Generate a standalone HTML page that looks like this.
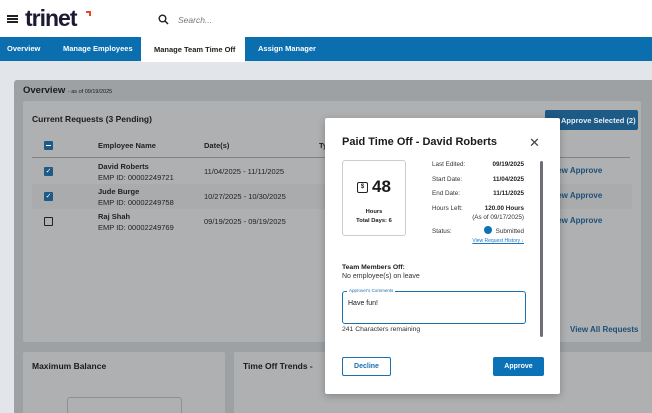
<!DOCTYPE html><html><head><style>
*{box-sizing:border-box;margin:0;padding:0}
html,body{width:652px;height:413px;overflow:hidden}
body{background:#e2e5e9;font-family:"Liberation Sans",sans-serif;position:relative;color:#1a1a1a}
.a{position:absolute}
.hdr{left:0;top:0;width:652px;height:37px;background:#fff}
.nav{left:0;top:37px;width:652px;height:24px;background:#0b6eae}
.nav span{position:absolute;top:7px;font-size:7.5px;font-weight:bold;color:#fff}
.outer{left:14px;top:80px;width:650px;height:340px;background:#9ea1a4;border-radius:3px}
.inner{left:23px;top:101px;width:618px;height:241px;background:#aeb0b2;border-radius:2px}
.b{font-weight:bold}
.cb{width:9px;height:9px;background:#1d5a87;border-radius:1px}
.row{font-size:7.5px;color:#222}
.va{color:#1e4f78;font-weight:bold;font-size:8px}
.modal{left:325px;top:118px;width:235px;height:276px;background:#fff;box-shadow:0 2px 8px rgba(0,0,0,.25);border-radius:2px}
.m{position:absolute;font-size:6.3px;color:#333}
.mr{position:absolute;font-size:6.3px;font-weight:bold;right:36px;text-align:right;color:#222}
</style></head><body>
<div class="a hdr">
 <div class="a" style="left:7px;top:15px;width:11px;height:2px;background:#222;box-shadow:0 3px 0 #222,0 6px 0 #222"></div>
 <div class="a b" style="left:25px;top:5px;font-size:23px;color:#1c1a33;letter-spacing:-1px">trinet</div>
 <div class="a" style="left:86px;top:11px;width:5px;height:5px;border-top:2px solid #e8452c;border-right:2px solid #e8452c"></div>
 <svg class="a" style="left:158px;top:14px" width="11" height="11" viewBox="0 0 11 11"><circle cx="4.5" cy="4.5" r="3.3" fill="none" stroke="#222" stroke-width="1.4"/><path d="M7 7l3 3" stroke="#222" stroke-width="1.5"/></svg>
 <div class="a" style="left:178px;top:15px;font-size:8.5px;font-style:italic;color:#777">Search...</div>
</div>
<div class="a nav">
 <span style="left:7px">Overview</span><span style="left:63px">Manage Employees</span>
 <div class="a" style="left:141px;top:0;width:104px;height:25px;background:#fff"></div>
 <span style="left:154px;color:#222;top:8px">Manage Team Time Off</span><span style="left:258px">Assign Manager</span>
</div>
<div class="a outer"></div>
<div class="a b" style="left:23px;top:85px;font-size:9.5px">Overview <span style="font-size:5.5px;font-weight:normal">- as of 09/19/2025</span></div>
<div class="a inner"></div>
<div class="a b" style="left:32px;top:114px;font-size:8.5px">Current Requests (3 Pending)</div>
<div class="a" style="left:545px;top:110px;width:93px;height:20px;background:#1d5a86;border-radius:2px;color:#e8eef4;font-size:7.5px;font-weight:bold;padding:6px 0 0 16px">Approve Selected (2)</div>
<div class="a cb" style="left:44px;top:141px"><div style="margin:4px 2px;height:1.2px;background:#fff"></div></div>
<div class="a row b" style="left:98px;top:141px">Employee Name</div>
<div class="a row b" style="left:204px;top:141px">Date(s)</div>
<div class="a row b" style="left:319px;top:141px">Ty</div>
<div class="a" style="left:32px;top:157px;width:520px;height:1px;background:#808285"></div>
<div class="a" style="left:540px;top:157px;width:90px;height:1px;background:#808285"></div>
<div class="a" style="left:32px;top:184px;width:600px;height:25px;background:#a9abad"></div>
<div class="a cb" style="left:44px;top:167px;color:#fff;font-size:7px;line-height:9px;text-align:center">✓</div>
<div class="a cb" style="left:44px;top:192px;color:#fff;font-size:7px;line-height:9px;text-align:center">✓</div>
<div class="a" style="left:44px;top:217px;width:9px;height:9px;border:1.2px solid #222;border-radius:1px"></div>
<div class="a row" style="left:98px;top:161px;line-height:11px"><b>David Roberts</b><br>EMP ID: 00002249721</div>
<div class="a row" style="left:98px;top:186px;line-height:11px"><b>Jude Burge</b><br>EMP ID: 00002249758</div>
<div class="a row" style="left:98px;top:211px;line-height:11px"><b>Raj Shah</b><br>EMP ID: 00002249769</div>
<div class="a row" style="left:204px;top:167px">11/04/2025 - 11/11/2025</div>
<div class="a row" style="left:204px;top:192px">10/27/2025 - 10/30/2025</div>
<div class="a row" style="left:204px;top:217px">09/19/2025 - 09/19/2025</div>
<div class="a va" style="left:555px;top:166px">iew Approve</div>
<div class="a va" style="left:555px;top:191px">iew Approve</div>
<div class="a va" style="left:555px;top:216px">iew Approve</div>
<div class="a va" style="left:570px;top:325px">View All Requests</div>
<div class="a" style="left:23px;top:352px;width:202px;height:70px;background:#aeb0b2;border-radius:2px"></div>
<div class="a" style="left:234px;top:352px;width:430px;height:70px;background:#aeb0b2;border-radius:2px"></div>
<div class="a b" style="left:32px;top:361px;font-size:8.5px">Maximum Balance</div>
<div class="a b" style="left:243px;top:361px;font-size:8.5px">Time Off Trends -</div>
<div class="a" style="left:67px;top:397px;width:115px;height:30px;border:1px solid #8e9093;border-radius:3px"></div>
<div class="a modal">
 <div class="a b" style="left:17px;top:18px;font-size:11px">Paid Time Off - David Roberts</div>
 <div class="a" style="left:204px;top:17px;font-size:13px;color:#444">✕</div>
 <div class="a" style="left:17px;top:42px;width:64px;height:76px;border:1px solid #ccc;border-radius:3px">
  <div class="a" style="left:14px;top:21px;width:11px;height:11px;border:1.2px solid #222;border-radius:2px;font-size:6px;font-weight:bold;text-align:center;line-height:9px">$</div>
  <div class="a b" style="left:29px;top:16px;font-size:17px">48</div>
  <div class="a b" style="left:0;width:62px;top:47px;font-size:5.8px;text-align:center;line-height:9px">Hours<br>Total Days: 6</div>
 </div>
 <div class="m" style="left:107px;top:43px">Last Edited:</div><div class="mr" style="top:43px">09/19/2025</div>
 <div class="m" style="left:107px;top:58px">Start Date:</div><div class="mr" style="top:58px">11/04/2025</div>
 <div class="m" style="left:107px;top:72px">End Date:</div><div class="mr" style="top:72px">11/11/2025</div>
 <div class="m" style="left:107px;top:87px">Hours Left:</div><div class="mr" style="top:87px">120.00 Hours</div>
 <div class="m" style="right:36px;top:96px">(As of 09/17/2025)</div>
 <div class="m" style="left:107px;top:110px">Status:</div>
 <div class="a" style="left:159px;top:108px;width:8px;height:8px;border-radius:50%;background:#0b72b8"></div>
 <div class="m" style="right:36px;top:110px">Submitted</div>
 <div class="m" style="right:36px;top:120px;font-size:5px;color:#1a78c2;text-decoration:underline">View Request History ↓</div>
 <div class="a" style="left:215px;top:43px;width:3px;height:176px;background:#6c6f75;border-radius:2px"></div>
 <div class="a b" style="left:17px;top:146px;font-size:6.8px">Team Members Off:</div>
 <div class="a" style="left:17px;top:155px;font-size:7px;color:#333">No employee(s) on leave</div>
 <div class="a" style="left:17px;top:173px;width:184px;height:33px;border:1.3px solid #1a6fae;border-radius:3px">
  <div class="a" style="left:4px;top:-4px;background:#fff;padding:0 2px;font-size:4.5px;color:#1a6fae">Approver's Comments</div>
  <div class="a" style="left:5px;top:8px;font-size:7px">Have fun!</div>
 </div>
 <div class="a" style="left:17px;top:208px;font-size:6.8px;color:#333">241 Characters remaining</div>
 <div class="a b" style="left:17px;top:239px;width:49px;height:19px;border:1.3px solid #1a6fae;border-radius:2px;font-size:7px;color:#1a6fae;text-align:center;line-height:17px">Decline</div>
 <div class="a b" style="left:168px;top:239px;width:51px;height:19px;background:#0b72b8;border-radius:2px;font-size:7px;color:#fff;text-align:center;line-height:19px">Approve</div>
</div>
</body></html>
